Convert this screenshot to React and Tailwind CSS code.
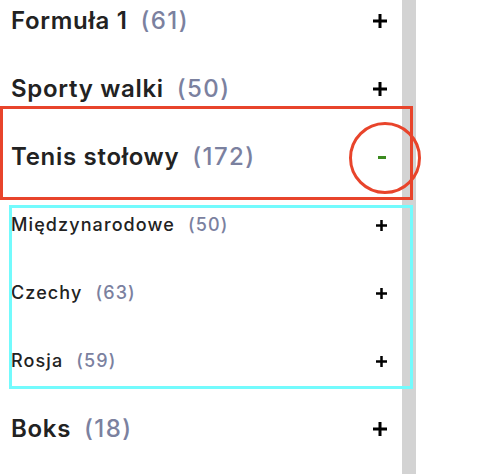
const categories = [
  { name: "Formuła 1", count: 61 },
  { name: "Sporty walki", count: 50 },
  {
    name: "Tenis stołowy",
    count: 172,
    open: true,
    children: [
      { name: "Międzynarodowe", count: 50 },
      { name: "Czechy", count: 63 },
      { name: "Rosja", count: 59 },
    ],
  },
  { name: "Boks", count: 18 },
];

function Plus({ size, stroke }) {
  return (
    <svg width={size} height={size} viewBox={`0 0 ${size} ${size}`} className="block">
      <path
        d={`M${size / 2} 0V${size}M0 ${size / 2}H${size}`}
        stroke="#000"
        strokeWidth={stroke}
      />
    </svg>
  );
}

function CategoryRow({ category }) {
  return (
    <div className="flex h-[68px] items-center justify-between pl-[11px] pr-[15px]">
      <div className="flex items-baseline text-[24px] font-semibold leading-none">
        <span className="tracking-[0.7px] text-[#222222]">{category.name}</span>
        <span className="ml-[13px] font-medium tracking-[1.4px] text-[#7b819f]">
          ({category.count})
        </span>
      </div>
      {category.open ? (
        <span className="mr-[1px] block h-[3px] w-[8px] bg-[#3b8a1f]" />
      ) : (
        <Plus size={14} stroke={3} />
      )}
    </div>
  );
}

function SubRow({ item }) {
  return (
    <div className="flex h-[68px] items-center justify-between pl-[11px] pr-[15px]">
      <div className="flex items-baseline text-[18px] font-medium leading-none tracking-[1.1px]">
        <span className="text-[#222222]">{item.name}</span>
        <span className="ml-[13px] text-[#7b819f]">({item.count})</span>
      </div>
      <Plus size={11} stroke={2.5} />
    </div>
  );
}

export default function App() {
  return (
    <div
      className="relative h-[474px] w-[482px] overflow-hidden bg-white"
      style={{ fontFamily: "Inter, 'Noto Sans', sans-serif" }}
    >
      <div className="flex h-full">
        <div className="-mt-[13px] w-[402px]">
          {categories.map((category) => (
            <div key={category.name}>
              <CategoryRow category={category} />
              {category.open &&
                category.children.map((item) => <SubRow key={item.name} item={item} />)}
            </div>
          ))}
        </div>
        <div className="w-[14px] bg-[#d3d3d3]" />
        <div className="flex-1" />
      </div>

      {/* annotation overlays */}
      <div className="pointer-events-none absolute left-0 top-[106px] h-[94px] w-[413px] border-[3px] border-[#e8442b]" />
      <div className="pointer-events-none absolute left-[349px] top-[122px] h-[72px] w-[72px] rounded-full border-[3px] border-[#e8442b]" />
      <div className="pointer-events-none absolute left-[9px] top-[205px] h-[184px] w-[404px] border-[3px] border-[#73fbfd]" />
    </div>
  );
}
